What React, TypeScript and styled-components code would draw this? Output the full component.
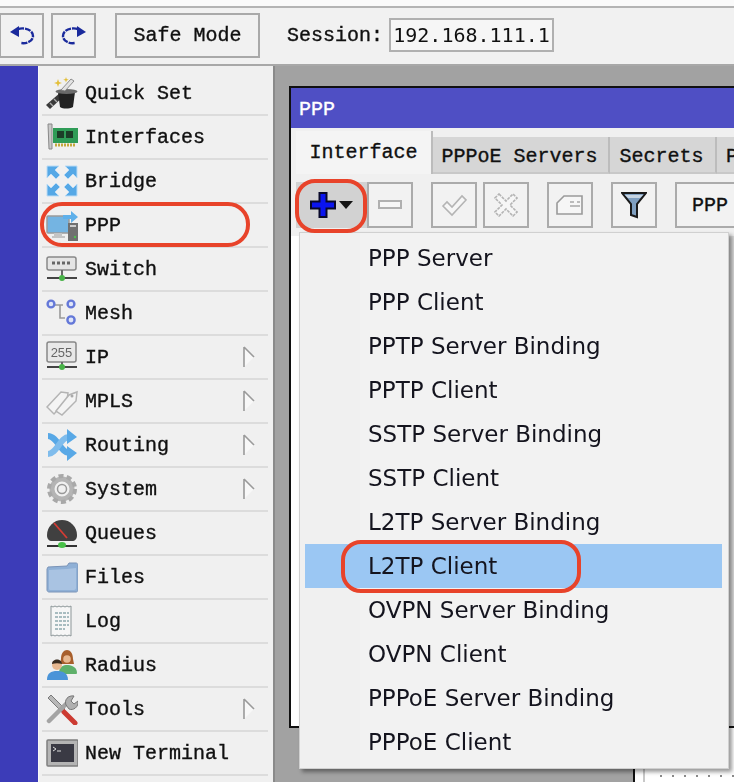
import styled, { createGlobalStyle } from 'styled-components';
import type { ReactNode } from 'react';

const GlobalStyle = createGlobalStyle`
  html, body {
    margin: 0;
    padding: 0;
    background: #f0f0f0;
  }
  * {
    box-sizing: border-box;
  }
`;

const Screen = styled.div`
  width: 734px;
  height: 782px;
  overflow: hidden;
  position: relative;
  background: #f0f0f0;
`;

const Shot = styled.div`
  width: 734px;
  height: 782px;
  position: relative;
  display: flex;
  flex-direction: column;
  filter: blur(0.35px);
  color: #101010;
  font-family: 'Liberation Mono', 'DejaVu Sans Mono', monospace;
  font-size: 20px;
  -webkit-text-stroke: 0.35px #101010;
`;

const TopStrip = styled.div`
  height: 8px;
  flex: none;
  background: #fafafa;
  border-bottom: 2px solid #b4b4b4;
`;

const TopBar = styled.div`
  height: 58px;
  flex: none;
  display: flex;
  align-items: center;
  padding-bottom: 2px;
  background: #f1f1f1;
  border-bottom: 2px solid #a8a8a8;
`;

const BarButton = styled.button<{ $w: number; $ml: number }>`
  width: ${(p) => p.$w}px;
  height: 45px;
  margin-left: ${(p) => p.$ml}px;
  padding: 0;
  display: flex;
  align-items: center;
  justify-content: center;
  background: #f1f1f1;
  border: 2px solid #a9a9a9;
  font: inherit;
  color: inherit;
`;

const SessionLabel = styled.span`
  margin-left: 27px;
  margin-right: 6px;
`;

const SessionField = styled.div`
  width: 165px;
  height: 34px;
  display: flex;
  align-items: center;
  justify-content: center;
  background: #f6f6f6;
  border: 2px solid #b0b0b0;
  font-family: 'DejaVu Sans Mono', monospace;
  font-size: 20px;
  -webkit-text-stroke: 0;
`;

const Body = styled.div`
  flex: 1;
  display: flex;
  min-height: 0;
`;

const BlueRail = styled.div`
  width: 39px;
  flex: none;
  background: #3c3cb8;
  border-right: 1px solid #f8f8f8;
`;

const SideMenu = styled.nav`
  width: 234px;
  flex: none;
  padding: 6px 5px 0 3px;
  background: #f0f0f0;
`;

const MenuRow = styled.div`
  height: 44px;
  padding-left: 3px;
  padding-right: 12px;
  display: flex;
  align-items: center;
  gap: 7px;
  border-bottom: 2px solid #dcdcdc;
  white-space: pre;
`;

const RowIcon = styled.span`
  width: 33px;
  height: 34px;
  flex: none;
  display: flex;
  align-items: center;
  justify-content: center;
`;

const RowLabel = styled.span`
  flex: 1;
`;

const Workspace = styled.div`
  flex: 1;
  position: relative;
  overflow: hidden;
  background: #a2a2a2;
  border-left: 2px solid #8a8a8a;
`;

const BackWindow = styled.div`
  position: absolute;
  left: 358px;
  top: 620px;
  width: 120px;
  height: 120px;
  background: #fff;
  border-left: 2px solid #101010;
  display: flex;
  padding-top: 82px;
`;

const BackColumn = styled.div`
  width: 10px;
  border-right: 2px solid #c8c8c8;
`;

const BackDots = styled.div`
  flex: 1;
  margin-left: 10px;
  height: 30px;
  background: radial-gradient(circle, #8a8a8a 1px, transparent 1.4px) 0 0 / 12px 16px;
`;

const PppWindow = styled.section`
  position: absolute;
  left: 14px;
  top: 20px;
  width: 470px;
  height: 642px;
  background: linear-gradient(90deg, #fff 20px, #dcdcdc 20px);
  border: 2px solid #101010;
  border-right: none;
  display: flex;
  flex-direction: column;
`;

const TitleBar = styled.div`
  height: 40px;
  flex: none;
  display: flex;
  align-items: center;
  padding: 3px 0 0 8px;
  background: #4f4fc4;
  color: #fff;
  -webkit-text-stroke: 0.35px #fff;
`;

const WindowContent = styled.div`
  height: 108px;
  flex: none;
  background: #f0f0f0;
  overflow: hidden;
`;

const TabStrip = styled.div`
  height: 46px;
  display: flex;
  align-items: flex-end;
  padding-left: 5px;
  white-space: pre;
`;

const Tab = styled.div<{ $active?: boolean; $w: number }>`
  width: ${(p) => p.$w}px;
  flex: none;
  height: ${(p) => (p.$active ? 43 : 37)}px;
  padding: ${(p) => (p.$active ? '0 0 1px' : '3px 2px 0 0')};
  display: flex;
  align-items: center;
  justify-content: center;
  background: ${(p) => (p.$active ? '#f4f4f4' : '#d6d6d6')};
  border-right: 2px solid #bcbcbc;
  border-bottom: ${(p) => (p.$active ? 'none' : '2px solid #c8c8c8')};
`;

const ClippedTab = styled(Tab)`
  justify-content: flex-start;
  padding-left: 9px;
`;

const ActionBar = styled.div`
  display: flex;
  padding: 8px 0 0 5px;
`;

const ActionButton = styled.button<{ $w?: number; $ml?: number; $pressed?: boolean }>`
  width: ${(p) => p.$w ?? 46}px;
  height: 46px;
  flex: none;
  margin-left: ${(p) => p.$ml ?? 0}px;
  padding: 0;
  display: flex;
  align-items: center;
  justify-content: center;
  gap: 3px;
  background: ${(p) => (p.$pressed ? '#d2d2d2' : '#f2f2f2')};
  border: 2px solid ${(p) => (p.$pressed ? '#d2d2d2' : '#ababab')};
  font: inherit;
  color: inherit;
`;

const DropMenu = styled.div`
  position: absolute;
  left: 299px;
  top: 232px;
  width: 430px;
  height: 537px;
  padding: 3px 6px 0 5px;
  display: flex;
  flex-direction: column;
  background: linear-gradient(90deg, #f0f0f0 60px, #f2f2f2 60px);
  border: 1px solid #d0d0d0;
  box-shadow: 3px 3px 4px rgba(0, 0, 0, 0.4);
  font-family: 'DejaVu Sans', sans-serif;
  font-size: 23px;
  color: #14141e;
  -webkit-text-stroke: 0;
`;

const DropItem = styled.div<{ $selected?: boolean }>`
  height: 44px;
  flex: none;
  padding-left: 63px;
  display: flex;
  align-items: center;
  background: ${(p) => (p.$selected ? '#9bc7f3' : 'transparent')};
`;

const Annotation = styled.div<{ $x: number; $y: number; $w: number; $h: number; $r: number }>`
  position: absolute;
  left: ${(p) => p.$x}px;
  top: ${(p) => p.$y}px;
  width: ${(p) => p.$w}px;
  height: ${(p) => p.$h}px;
  border: 4px solid #e8432a;
  border-radius: ${(p) => p.$r}px;
`;

const Svg = ({ children, w = 32, h = 32 }: { children: ReactNode; w?: number; h?: number }) => (
  <svg width={w} height={h} viewBox={`0 0 ${w} ${h}`} fill="none">
    {children}
  </svg>
);

const UndoIcon = () => (
  <Svg w={26} h={22}>
    <path d="M1 8l9-6v11z" fill="#1a2a9c" />
    <path d="M9 5c7-2 15 1 15 7 0 5-6 8-12 7" stroke="#1a2a9c" strokeWidth="2.4" strokeDasharray="6 1" />
  </Svg>
);

const RedoIcon = () => (
  <Svg w={26} h={22}>
    <path d="M25 8l-9-6v11z" fill="#1a2a9c" />
    <path d="M17 5C10 3 2 6 2 12c0 5 6 8 12 7" stroke="#1a2a9c" strokeWidth="2.4" strokeDasharray="6 1" />
  </Svg>
);

const QuickSetIcon = () => (
  <Svg>
    <path d="M0 28l15-13 4 3L4 32z" fill="#3a3a3a" />
    <path d="M4 26l3 3M8 22l3 3" stroke="#aaa" strokeWidth="1.4" />
    <path d="M12 15h17l-2 15c-4 2-10 2-13 0z" fill="#222" />
    <ellipse cx="20.5" cy="14.5" rx="11" ry="2.6" fill="#6a6a6a" />
    <path d="M15 13L25 2l3 2-9 10z" fill="#e2e2e2" stroke="#777" strokeWidth=".8" />
    <path d="M12 2l1 3 3 1-3 1-1 3-1-3-3-1 3-1zM20 0l.7 2 2 .7-2 .7-.7 2-.7-2-2-.7 2-.7z" fill="#e3bf3a" />
  </Svg>
);

const InterfacesIcon = () => (
  <Svg>
    <path d="M2 3h4v25H3z" fill="#c8c8c8" stroke="#888" />
    <rect x="7" y="7" width="25" height="15" fill="#2f9c57" />
    <rect x="11" y="10" width="7" height="7" fill="#1c3d28" />
    <rect x="20" y="10" width="7" height="7" fill="#1c3d28" />
    <path d="M9 24h20" stroke="#c2a83c" strokeWidth="3" strokeDasharray="2 1" />
  </Svg>
);

const BridgeIcon = () => (
  <Svg>
    <g fill="#55a8e6" stroke="#bcdcf5" strokeWidth="1">
      <path d="M1 1h12l-4 4 5 5-4 4-5-5-4 4z" />
      <path d="M31 1H19l4 4-5 5 4 4 5-5 4 4z" />
      <path d="M1 31h12l-4-4 5-5-4-4-5 5-4-4z" />
      <path d="M31 31H19l4-4-5-5 4-4 5 5 4-4z" />
    </g>
  </Svg>
);

const PppIcon = () => (
  <Svg>
    <rect x="1" y="7" width="22" height="17" rx="1" fill="#74b4e2" stroke="#9a9a9a" strokeWidth="1.5" />
    <path d="M8 24h8v3h3v2H6v-2h2z" fill="#c4c4c4" />
    <rect x="22" y="14" width="10" height="18" fill="#707070" />
    <rect x="24" y="16" width="6" height="2" fill="#ccc" />
    <circle cx="29" cy="28" r="1.2" fill="#4fc04f" />
    <path d="M17 6h8V2l7 6-7 6v-4h-8z" fill="#5fb0ea" />
  </Svg>
);

const SwitchIcon = () => (
  <Svg>
    <rect x="1" y="4" width="29" height="13" rx="2" fill="#e4e4e4" stroke="#888" strokeWidth="1.5" />
    <path d="M6 10h20" stroke="#666" strokeWidth="3" strokeDasharray="3 2" />
    <path d="M1 25h30" stroke="#444" strokeWidth="2" />
    <path d="M15 17h2v6h-2z" fill="#666" />
    <circle cx="16" cy="25" r="3" fill="#48b348" />
  </Svg>
);

const MeshIcon = () => (
  <Svg>
    <path d="M8 8h9M14 8v13h5" stroke="#999" strokeWidth="1.6" />
    <g fill="#dfe5f8" stroke="#6478d8" strokeWidth="2.4">
      <circle cx="5" cy="7" r="3.4" />
      <circle cx="25" cy="7" r="3.4" />
      <circle cx="25" cy="23" r="3.6" />
    </g>
  </Svg>
);

const IpIcon = () => (
  <Svg>
    <rect x="1" y="1" width="29" height="20" rx="2" fill="#e8e8e8" stroke="#888" strokeWidth="1.5" />
    <text x="15.5" y="16" textAnchor="middle" fontFamily="Liberation Sans" fontSize="13" fill="#666" strokeWidth="0">
      255
    </text>
    <path d="M1 26h30" stroke="#444" strokeWidth="2" />
    <path d="M15 21h2v4h-2z" fill="#666" />
    <circle cx="16" cy="26" r="3" fill="#48b348" />
  </Svg>
);

const MplsIcon = () => (
  <Svg>
    <g fill="#f4f4f4" stroke="#b4b4b4" strokeWidth="1.5">
      <path d="M1 22L15 7l7 1-1 7-13 14z" />
      <path d="M10 26L23 10l8-3-1 9-14 14z" />
    </g>
    <circle cx="26" cy="11" r="1.5" fill="#aaa" />
  </Svg>
);

const RoutingIcon = () => (
  <Svg>
    <path d="M2 7c9 0 13 17 21 17" stroke="#58a8e6" strokeWidth="6" />
    <path d="M2 25C11 25 14 8 23 8" stroke="#7fbcec" strokeWidth="6" />
    <path d="M21 0l10 8-10 7zM21 17l10 7-10 8z" fill="#58a8e6" />
  </Svg>
);

const SystemIcon = () => (
  <Svg>
    <circle cx="16" cy="16" r="10" stroke="#b4b4b4" strokeWidth="5" />
    <circle cx="16" cy="16" r="13" stroke="#a8a8a8" strokeWidth="4" strokeDasharray="5 3.2" />
    <circle cx="16" cy="16" r="4.5" fill="#f0f0f0" stroke="#999" strokeWidth="1.5" />
  </Svg>
);

const QueuesIcon = () => (
  <Svg>
    <path d="M1 18a15 15 0 0 1 30 0c0 4-2 6-5 6H6c-3 0-5-2-5-6z" fill="#404040" />
    <path d="M8 6l13 15" stroke="#d43c34" strokeWidth="1.8" />
    <path d="M1 29h30" stroke="#333" strokeWidth="2" />
    <ellipse cx="16" cy="28" rx="4" ry="3" fill="#48c048" />
  </Svg>
);

const FilesIcon = () => (
  <Svg>
    <path d="M2 6l19-1 2-3h7c1 0 2 1 2 2v25c0 1-1 2-2 2H3c-1 0-2-1-2-2V8z" fill="#8fb0d6" stroke="#7a94b8" />
    <path d="M3 9l18-1 9-1v20c0 1-1 2-2 2H4c-1 0-1-1-1-2z" fill="#a9c3e2" />
  </Svg>
);

const LogIcon = () => (
  <Svg>
    <path d="M5 1l2 1 2-1 2 1 2-1 2 1 2-1 2 1 2-1 2 1 2-1v30l-2-1-2 1-2-1-2 1-2-1-2 1-2-1-2 1-2-1-2 1z" fill="#f6f6f6" stroke="#8c9698" />
    <path d="M9 8h14M9 12h14M9 16h14M9 20h14M9 24h10" stroke="#a8bcc0" strokeWidth="1.8" strokeDasharray="3 1" />
  </Svg>
);

const RadiusIcon = () => (
  <Svg>
    <path d="M15 10c0-12 12-12 12 0l1 5H14z" fill="#a85f2c" />
    <circle cx="21" cy="10" r="3.8" fill="#e8b890" />
    <path d="M13 24c0-7 5-8 8-8s10 1 10 8c0 1-1 1-2 1H14z" fill="#5fb06a" />
    <circle cx="11" cy="16" r="5" fill="#e8b890" />
    <path d="M6 15c0-6 10-6 10 0-3-1-7-1-10 0z" fill="#3a2c20" />
    <path d="M1 31c0-7 4-9 10-9s11 2 11 9z" fill="#4a94d8" />
  </Svg>
);

const ToolsIcon = () => (
  <Svg>
    <path d="M2 5l3-3 14 14-3 3z" fill="#b8b8b8" stroke="#7a7a7a" />
    <path d="M18 19l11 11" stroke="#cc3b32" strokeWidth="5" strokeLinecap="round" />
    <path d="M3 28L21 10" stroke="#a4a4a4" strokeWidth="4.5" strokeLinecap="round" />
    <path d="M20 12c-2-5 2-10 8-9l-3 5 3 3 4-3c1 6-5 10-9 8z" fill="#b0b0b0" stroke="#777" />
  </Svg>
);

const TerminalIcon = () => (
  <Svg>
    <rect x="1" y="3" width="31" height="26" rx="1" fill="#b4b4b4" stroke="#7e7e7e" strokeWidth="1.5" />
    <rect x="5" y="7" width="23" height="18" fill="#3a3a44" />
    <path d="M7 10l3 2-3 2M11 14h4" stroke="#ddd" strokeWidth="1" />
  </Svg>
);

const NextIcon = () => (
  <Svg>
    <rect x="4" y="2" width="24" height="28" fill="#b0b0b0" />
  </Svg>
);

const SubmenuArrow = () => (
  <Svg w={14} h={22}>
    <path d="M2 1l10 10-10 10z" fill="#f8f8f8" />
    <path d="M2 1v20M2 1l10 10" stroke="#9a9a9a" strokeWidth="1.6" />
  </Svg>
);

const PlusIcon = () => (
  <Svg w={26} h={26}>
    <path d="M9.5 1h7v8.5H25v7h-8.5V25h-7v-8.5H1v-7h8.5z" fill="#0a14f0" stroke="#08082a" strokeWidth="2" />
  </Svg>
);

const CaretIcon = () => (
  <Svg w={14} h={8}>
    <path d="M0 0h14L7 8z" fill="#141414" />
  </Svg>
);

const MinusIcon = () => (
  <Svg w={24} h={12}>
    <rect x="1" y="2" width="22" height="7" fill="#f6f6f6" stroke="#b0b0b0" strokeWidth="2" />
  </Svg>
);

const CheckIcon = () => (
  <Svg w={26} h={24}>
    <path d="M2 13l4-4 5 5L21 3l4 4-14 15z" fill="#f6f6f6" stroke="#b4b4b4" strokeWidth="1.6" />
  </Svg>
);

const CrossIcon = () => (
  <Svg w={24} h={24}>
    <path d="M5 1l7 7 7-7 4 4-7 7 7 7-4 4-7-7-7 7-4-4 7-7-7-7z" fill="#f6f6f6" stroke="#b4b4b4" strokeWidth="1.6" strokeDasharray="3 1" />
  </Svg>
);

const CommentIcon = () => (
  <Svg w={28} h={22}>
    <path d="M1 9l7-7h18v18H1z" fill="#f6f6f6" stroke="#9a9a9a" strokeWidth="1.6" />
    <path d="M14 8h4M21 8h3M14 12h10" stroke="#a8a8a8" strokeWidth="1.4" />
  </Svg>
);

const FilterIcon = () => (
  <Svg w={26} h={28}>
    <path d="M1 2h24l-9 11v13l-6-2V13z" fill="#7f9fc0" stroke="#1a1a1a" strokeWidth="2" />
    <path d="M4 4h18l-3 3H7z" fill="#c6d4e2" />
  </Svg>
);

const menuItems: { label: string; icon: ReactNode; sub?: boolean }[] = [
  { label: 'Quick Set', icon: <QuickSetIcon /> },
  { label: 'Interfaces', icon: <InterfacesIcon /> },
  { label: 'Bridge', icon: <BridgeIcon /> },
  { label: 'PPP', icon: <PppIcon /> },
  { label: 'Switch', icon: <SwitchIcon /> },
  { label: 'Mesh', icon: <MeshIcon /> },
  { label: 'IP', icon: <IpIcon />, sub: true },
  { label: 'MPLS', icon: <MplsIcon />, sub: true },
  { label: 'Routing', icon: <RoutingIcon />, sub: true },
  { label: 'System', icon: <SystemIcon />, sub: true },
  { label: 'Queues', icon: <QueuesIcon /> },
  { label: 'Files', icon: <FilesIcon /> },
  { label: 'Log', icon: <LogIcon /> },
  { label: 'Radius', icon: <RadiusIcon /> },
  { label: 'Tools', icon: <ToolsIcon />, sub: true },
  { label: 'New Terminal', icon: <TerminalIcon /> },
  { label: '', icon: <NextIcon /> },
];

const dropItems = [
  'PPP Server',
  'PPP Client',
  'PPTP Server Binding',
  'PPTP Client',
  'SSTP Server Binding',
  'SSTP Client',
  'L2TP Server Binding',
  'L2TP Client',
  'OVPN Server Binding',
  'OVPN Client',
  'PPPoE Server Binding',
  'PPPoE Client',
];

export default function App() {
  return (
    <Screen>
      <GlobalStyle />
      <Shot>
        <TopStrip />
        <TopBar>
          <BarButton $w={45} $ml={-1}>
            <UndoIcon />
          </BarButton>
          <BarButton $w={45} $ml={7}>
            <RedoIcon />
          </BarButton>
          <BarButton $w={145} $ml={19}>
            Safe Mode
          </BarButton>
          <SessionLabel>Session:</SessionLabel>
          <SessionField>192.168.111.1</SessionField>
        </TopBar>
        <Body>
          <BlueRail />
          <SideMenu>
            {menuItems.map((item) => (
              <MenuRow key={item.label}>
                <RowIcon>{item.icon}</RowIcon>
                <RowLabel>{item.label}</RowLabel>
                {item.sub && <SubmenuArrow />}
              </MenuRow>
            ))}
          </SideMenu>
          <Workspace>
            <BackWindow>
              <BackColumn />
              <BackDots />
            </BackWindow>
            <PppWindow>
              <TitleBar>PPP</TitleBar>
              <WindowContent>
                <TabStrip>
                  <Tab $active $w={137}>
                    Interface
                  </Tab>
                  <Tab $w={177}>PPPoE Servers</Tab>
                  <Tab $w={107}>Secrets</Tab>
                  <ClippedTab $w={100}>Profiles</ClippedTab>
                </TabStrip>
                <ActionBar>
                  <ActionButton $w={71} $pressed>
                    <PlusIcon />
                    <CaretIcon />
                  </ActionButton>
                  <ActionButton>
                    <MinusIcon />
                  </ActionButton>
                  <ActionButton $ml={18}>
                    <CheckIcon />
                  </ActionButton>
                  <ActionButton $ml={6}>
                    <CrossIcon />
                  </ActionButton>
                  <ActionButton $ml={18}>
                    <CommentIcon />
                  </ActionButton>
                  <ActionButton $ml={18}>
                    <FilterIcon />
                  </ActionButton>
                  <ActionButton $w={70} $ml={18}>
                    PPP
                  </ActionButton>
                </ActionBar>
              </WindowContent>
            </PppWindow>
          </Workspace>
        </Body>
        <DropMenu>
          {dropItems.map((label) => (
            <DropItem key={label} $selected={label === 'L2TP Client'}>
              {label}
            </DropItem>
          ))}
        </DropMenu>
      </Shot>
      <Annotation $x={40} $y={202} $w={210} $h={45} $r={22} />
      <Annotation $x={295} $y={179} $w={72} $h={54} $r={20} />
      <Annotation $x={341} $y={540} $w={240} $h={53} $r={20} />
    </Screen>
  );
}
